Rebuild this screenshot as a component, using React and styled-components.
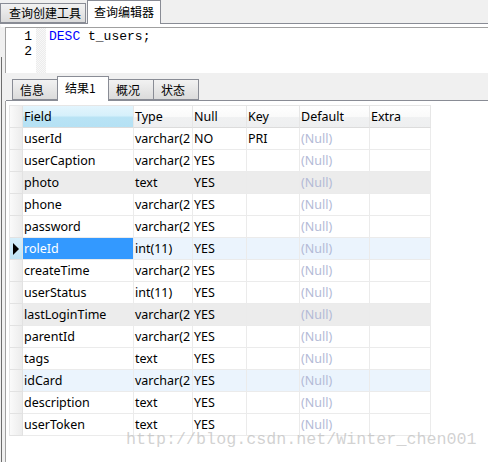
import React from 'react'
import styled, { createGlobalStyle } from 'styled-components'

const GlobalStyle = createGlobalStyle`
  html, body { margin: 0; padding: 0; background: #f0f0f0; }
  body { font-family: "Noto Sans", "Noto Sans CJK SC", sans-serif; }
`

const columns = ['Field', 'Type', 'Null', 'Key', 'Default', 'Extra']

const rows = [
  { field: 'userId', type: 'varchar(2', nul: 'NO', key: 'PRI' },
  { field: 'userCaption', type: 'varchar(2', nul: 'YES' },
  { field: 'photo', type: 'text', nul: 'YES', tone: 'gray' },
  { field: 'phone', type: 'varchar(2', nul: 'YES' },
  { field: 'password', type: 'varchar(2', nul: 'YES' },
  { field: 'roleId', type: 'int(11)', nul: 'YES', tone: 'blue', current: true },
  { field: 'createTime', type: 'varchar(2', nul: 'YES' },
  { field: 'userStatus', type: 'int(11)', nul: 'YES' },
  { field: 'lastLoginTime', type: 'varchar(2', nul: 'YES', tone: 'gray' },
  { field: 'parentId', type: 'varchar(2', nul: 'YES' },
  { field: 'tags', type: 'text', nul: 'YES' },
  { field: 'idCard', type: 'varchar(2', nul: 'YES', tone: 'blue' },
  { field: 'description', type: 'text', nul: 'YES' },
  { field: 'userToken', type: 'text', nul: 'YES' },
]

export default function App() {
  return (
    <>
      <GlobalStyle />
      <Page>
        <TopTabs>
          <TopTab>查询创建工具</TopTab>
          <TopTab $active>查询编辑器</TopTab>
        </TopTabs>
        <Frame>
          <Editor>
            <Gutter>
              <LineNo>1</LineNo>
              <LineNo>2</LineNo>
            </Gutter>
            <Fold />
            <Code>
              <CodeLine><Keyword>DESC</Keyword> t_users;</CodeLine>
              <CodeLine>&nbsp;</CodeLine>
            </Code>
          </Editor>
          <ResultTabs>
            <ResultTab>信息</ResultTab>
            <ResultTab $active>结果1</ResultTab>
            <ResultTab>概况</ResultTab>
            <ResultTab>状态</ResultTab>
          </ResultTabs>
          <ResultPane>
            <Grid>
              <Indicator $head />
              {columns.map((c, i) => (
                <HeadCell key={c} $sorted={i === 0}>{c}</HeadCell>
              ))}
              {rows.map((r) => (
                <React.Fragment key={r.field}>
                  <Indicator $current={r.current}>
                    {r.current && <Arrow />}
                  </Indicator>
                  <Cell $tone={r.tone} $selected={r.current}>{r.field}</Cell>
                  <Cell $tone={r.tone}>{r.type}</Cell>
                  <Cell $tone={r.tone}>{r.nul}</Cell>
                  <Cell $tone={r.tone}>{r.key || ''}</Cell>
                  <Cell $tone={r.tone} $null>(Null)</Cell>
                  <Cell $tone={r.tone} />
                </React.Fragment>
              ))}
            </Grid>
            <Watermark>http://blog.csdn.net/Winter_chen001</Watermark>
          </ResultPane>
        </Frame>
      </Page>
    </>
  )
}

const Page = styled.div`
  width: 488px;
  height: 462px;
  overflow: hidden;
  background: #f0f0f0;
  font-family: "Noto Sans", "Noto Sans CJK SC", sans-serif;
  color: #000;
`

const TopTabs = styled.div`
  display: flex;
  align-items: flex-end;
  border-bottom: 1px solid #898c95;
  box-sizing: border-box;
  height: 24px;
`

const TopTab = styled.div`
  font-family: "Noto Sans CJK SC", sans-serif;
  font-size: 12px;
  box-sizing: border-box;
  height: ${p => (p.$active ? '24px' : '20px')};
  margin-bottom: ${p => (p.$active ? '-1px' : '0')};
  margin-left: ${p => (p.$active ? '1px' : '0')};
  padding: ${p => (p.$active ? '3px 6px 0 6px' : '1px 4px 0 8px')};
  border: 1px solid #898c95;
  border-bottom: ${p => (p.$active ? 'none' : '1px solid #898c95')};
  background: ${p => (p.$active ? '#fff' : 'linear-gradient(#f2f2f2, #dbdbdb)')};
  line-height: 16px;
`

const Frame = styled.div`
  background: #f0f0f0;
  border-top: 3px solid #fff;
  border-left: 1px solid #f0f0f0;
  height: 438px;
  box-sizing: border-box;
  position: relative;
  &::before {
    content: '';
    position: absolute;
    left: 0;
    top: 30px;
    bottom: 0;
    width: 1px;
    background: #6d6d6d;
  }
`

const Editor = styled.div`
  display: flex;
  height: 46px;
  box-sizing: border-box;
  margin-left: 4px;
  background: #fff;
  border-top: 1px solid #a0a0a0;
  border-left: 1px solid #a0a0a0;
`

const Gutter = styled.div`
  width: 26px;
  padding-top: 1px;
  background: #fff;
`

const LineNo = styled.div`
  font-family: "Liberation Mono", monospace;
  font-size: 13px;
  line-height: 15px;
  text-align: right;
  color: #000;
`

const Fold = styled.div`
  width: 10px;
  margin-left: 4px;
  background-color: #f4f4f4;
  background-image: repeating-conic-gradient(#ececec 0 25%, #f8f8f8 0 50%);
  background-size: 2px 2px;
`

const Code = styled.div`
  padding: 1px 0 0 3px;
`

const CodeLine = styled.div`
  font-family: "Liberation Mono", monospace;
  font-size: 13px;
  line-height: 15px;
  white-space: pre;
`

const Keyword = styled.span`
  color: #0000ff;
`

const ResultTabs = styled.div`
  height: 28px;
  display: flex;
  align-items: flex-end;
  padding-left: 6px;
  margin-left: 5px;
  border-bottom: 1px solid #898c95;
  box-sizing: border-box;
  background: #f0f0f0;
`

const ResultTab = styled.div`
  font-family: "Noto Sans CJK SC", sans-serif;
  font-size: 12px;
  box-sizing: border-box;
  height: ${p => (p.$active ? '25px' : '21px')};
  margin-bottom: ${p => (p.$active ? '-1px' : '0')};
  width: ${p => (p.$active ? '52px' : '46px')};
  padding: ${p => (p.$active ? '3px 0 0 7px' : '2px 0 0 7px')};
  border: 1px solid #898c95;
  border-bottom: ${p => (p.$active ? 'none' : '1px solid #898c95')};
  margin-right: -1px;
  background: ${p => (p.$active ? '#fff' : 'linear-gradient(#f2f2f2, #dbdbdb)')};
  line-height: 16px;
  position: relative;
  z-index: ${p => (p.$active ? 1 : 0)};
`

const ResultPane = styled.div`
  position: relative;
  margin-left: 4px;
  height: 361px;
  background: #fff;
  border-left: 1px solid #a0a0a0;
  padding: 4px 0 0 3px;
  box-sizing: border-box;
`

const Grid = styled.div`
  display: grid;
  grid-template-columns: 13px 111px 59px 54px 53px 70px 61px;
  grid-auto-rows: 22px;
  width: max-content;
  border-top: 1px solid #e6e6e6;
  border-left: 1px solid #e6e6e6;
`

const Indicator = styled.div`
  box-sizing: border-box;
  border-right: 1px solid #e2e2e2;
  border-bottom: 1px solid #e2e2e2;
  background: ${p => (p.$current ? 'linear-gradient(#d6effb, #bfe4f6)' : 'linear-gradient(90deg, #fafafa, #ececec)')};
  display: flex;
  align-items: center;
  padding-left: 3px;
`

const Arrow = styled.span`
  width: 0;
  height: 0;
  border-top: 6px solid transparent;
  border-bottom: 6px solid transparent;
  border-left: 6px solid #000;
`

const HeadCell = styled.div`
  box-sizing: border-box;
  border-right: 1px solid #e6e6e6;
  border-bottom: 1px solid #dcdcdc;
  background: ${p => (p.$sorted ? 'linear-gradient(#e3f5fd 0%, #d6f0fb 45%, #b8e3f5 55%, #b5e1f4 100%)' : 'linear-gradient(#ffffff 0%, #fafafa 50%, #f0f1f2 55%, #eeeff0 100%)')};
  font-size: 12.5px;
  line-height: 21px;
  padding-left: 1px;
  white-space: nowrap;
  overflow: hidden;
`

const toneBg = {
  gray: '#ececec',
  blue: '#ebf4fd',
}

const Cell = styled.div`
  box-sizing: border-box;
  border-right: 1px solid #ebebeb;
  border-bottom: 1px solid #ebebeb;
  background: ${p => (p.$selected ? '#3399ff' : toneBg[p.$tone] || '#fff')};
  color: ${p => (p.$selected ? '#fff' : p.$null ? '#b3bad6' : '#000')};
  font-size: 12.5px;
  line-height: 21px;
  padding-left: 1px;
  white-space: nowrap;
  overflow: hidden;
`

const Watermark = styled.div`
  position: absolute;
  left: 120px;
  top: 330px;
  font-family: "Liberation Mono", monospace;
  font-size: 16.7px;
  line-height: 18px;
  color: rgba(185, 185, 185, 0.65);
  white-space: nowrap;
  pointer-events: none;
`
